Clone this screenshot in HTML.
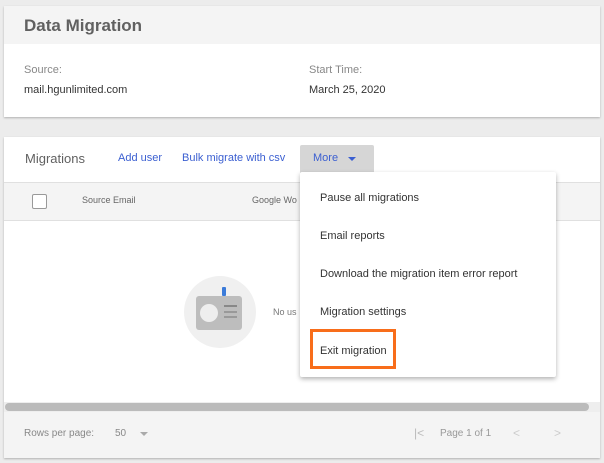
<!DOCTYPE html>
<html><head><style>
*{margin:0;padding:0;box-sizing:border-box}
body{width:604px;height:463px;background:#ececec;font-family:"Liberation Sans",sans-serif;position:relative;overflow:hidden}
.abs{position:absolute}
.card{position:absolute;background:#fff;box-shadow:0 1px 2px rgba(0,0,0,.25)}
</style></head><body>
<div class="card" style="left:4px;top:6px;width:596px;height:111px">
  <div class="abs" style="left:0;top:0;width:596px;height:38px;background:#f4f4f4"></div>
  <div class="abs" style="left:20px;top:10px;font-size:17px;font-weight:bold;color:#616161">Data Migration</div>
  <div class="abs" style="left:20px;top:58px;font-size:11px;color:#888">Source:</div>
  <div class="abs" style="left:20px;top:78px;font-size:11px;color:#333">mail.hgunlimited.com</div>
  <div class="abs" style="left:305px;top:58px;font-size:11px;color:#888">Start Time:</div>
  <div class="abs" style="left:305px;top:78px;font-size:11px;color:#333">March 25, 2020</div>
</div>
<div class="card" style="left:4px;top:137px;width:596px;height:321px">
  <div class="abs" style="left:21px;top:14px;font-size:13px;color:#616161">Migrations</div>
  <div class="abs" style="left:114px;top:15px;font-size:11px;color:#3b5fd1">Add user</div>
  <div class="abs" style="left:178px;top:15px;font-size:11px;color:#3b5fd1">Bulk migrate with csv</div>
  <div class="abs" style="left:296px;top:8px;width:74px;height:28px;background:#d6d6d6;border-radius:2px 2px 0 0"></div>
  <div class="abs" style="left:309px;top:15px;font-size:11px;color:#3b5fd1">More</div>
  <div class="abs" style="left:344px;top:20px;width:0;height:0;border-left:4px solid transparent;border-right:4px solid transparent;border-top:4px solid #3b5fd1"></div>
  <div class="abs" style="left:0;top:45px;width:596px;height:39px;background:#f4f4f4;border-top:1px solid #e0e0e0;border-bottom:1px solid #e0e0e0"></div>
  <div class="abs" style="left:28px;top:57px;width:15px;height:15px;border:1px solid #999;border-radius:2px;background:#fff"></div>
  <div class="abs" style="left:78px;top:58px;font-size:9px;color:#666">Source Email</div>
  <div class="abs" style="left:248px;top:58px;font-size:9px;color:#666">Google Wo</div>
  <div class="abs" style="left:180px;top:139px;width:72px;height:72px;border-radius:50%;background:#f0f0f0"></div>
  <div class="abs" style="left:192px;top:159px;width:46px;height:34px;border-radius:3px;background:#bdbdbd"></div>
  <div class="abs" style="left:218px;top:150px;width:4px;height:9px;background:#3b7bd9;border-radius:1px"></div>
  <div class="abs" style="left:196px;top:167px;width:18px;height:18px;border-radius:50%;background:#eee"></div>
  <div class="abs" style="left:220px;top:168px;width:13px;height:2px;background:#888"></div>
  <div class="abs" style="left:220px;top:174px;width:13px;height:2px;background:#999"></div>
  <div class="abs" style="left:220px;top:179px;width:13px;height:2px;background:#999"></div>
  <div class="abs" style="left:269px;top:170px;font-size:9px;color:#777">No us</div>
  <div class="abs" style="left:0;top:265px;width:596px;height:10px;background:#eee"></div>
  <div class="abs" style="left:1px;top:266px;width:584px;height:8px;background:#bbb;border-radius:4px"></div>
  <div class="abs" style="left:0;top:275px;width:596px;height:46px;background:#f4f4f4"></div>
  <div class="abs" style="left:20px;top:291px;font-size:10px;color:#888">Rows per page:</div>
  <div class="abs" style="left:111px;top:291px;font-size:10px;color:#888">50</div>
  <div class="abs" style="left:136px;top:295px;width:0;height:0;border-left:4px solid transparent;border-right:4px solid transparent;border-top:4px solid #aaa"></div>
  <div class="abs" style="left:410px;top:289px;font-size:12px;color:#bbb">|&lt;</div>
  <div class="abs" style="left:436px;top:291px;font-size:10px;color:#999">Page 1 of 1</div>
  <div class="abs" style="left:509px;top:289px;font-size:12px;color:#ccc">&lt;</div>
  <div class="abs" style="left:550px;top:289px;font-size:12px;color:#ccc">&gt;</div>
</div>
<div class="abs" style="left:300px;top:172px;width:256px;height:205px;background:#fff;box-shadow:0 2px 5px rgba(0,0,0,.3);border-radius:2px">
  <div class="abs" style="left:20px;top:20px;font-size:11px;color:#333">Pause all migrations</div>
  <div class="abs" style="left:20px;top:58px;font-size:11px;color:#333">Email reports</div>
  <div class="abs" style="left:20px;top:96px;font-size:11px;color:#333">Download the migration item error report</div>
  <div class="abs" style="left:20px;top:134px;font-size:11px;color:#333">Migration settings</div>
  <div class="abs" style="left:20px;top:173px;font-size:11px;color:#333">Exit migration</div>
  <div class="abs" style="left:10px;top:157px;width:86px;height:40px;border:3px solid #f86d1a"></div>
</div>
</body></html>
